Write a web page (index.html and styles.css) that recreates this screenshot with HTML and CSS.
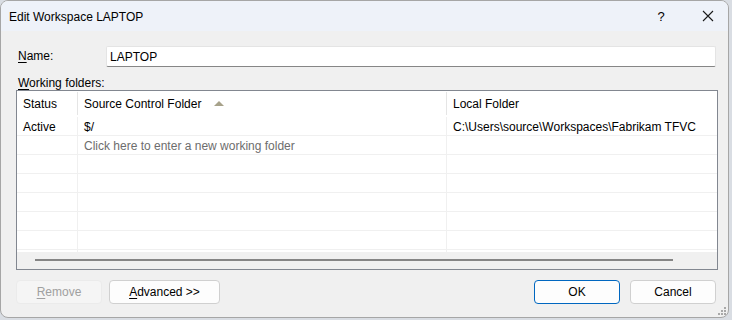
FILE: index.html
```html
<!DOCTYPE html>
<html lang="en">
<head>
    <meta charset="UTF-8">
    <title>Edit Workspace LAPTOP</title>
    <link rel="stylesheet" href="styles.css">
</head>
<body>
    <div class="window">
        <div class="titlebar">
            <span class="title">Edit Workspace LAPTOP</span>
            <span class="help">?</span>
            <span class="close">
                <svg width="12" height="12" viewBox="0 0 12 12">
                    <path d="M1 1 L11 11 M11 1 L1 11" stroke="#1a1a1a" stroke-width="1.1" fill="none"/>
                </svg>
            </span>
        </div>
        <div class="content">
            <div class="name-row">
                <label class="name-label"><u>N</u>ame:</label>
                <div class="name-input">LAPTOP</div>
            </div>
            <div class="section-label"><u>W</u>orking folders:</div>
            <div class="listbox">
                <div class="grid">
                    <div class="row header">
                        <div class="cell c-status">Status</div>
                        <div class="cell c-source">Source Control Folder <span class="sort"></span></div>
                        <div class="cell c-local">Local Folder</div>
                    </div>
                    <div class="row">
                        <div class="cell c-status">Active</div>
                        <div class="cell c-source">$/</div>
                        <div class="cell c-local">C:\Users\source\Workspaces\Fabrikam TFVC</div>
                    </div>
                    <div class="row">
                        <div class="cell c-status"></div>
                        <div class="cell c-source hint">Click here to enter a new working folder</div>
                        <div class="cell c-local"></div>
                    </div>
                    <div class="row"><div class="cell c-status"></div><div class="cell c-source"></div><div class="cell c-local"></div></div>
                    <div class="row"><div class="cell c-status"></div><div class="cell c-source"></div><div class="cell c-local"></div></div>
                    <div class="row"><div class="cell c-status"></div><div class="cell c-source"></div><div class="cell c-local"></div></div>
                    <div class="row"><div class="cell c-status"></div><div class="cell c-source"></div><div class="cell c-local"></div></div>
                    <div class="row"><div class="cell c-status"></div><div class="cell c-source"></div><div class="cell c-local"></div></div>
                    <div class="row last"><div class="cell c-status"></div><div class="cell c-source"></div><div class="cell c-local"></div></div>
                </div>
                <div class="hscroll"><div class="thumb"></div></div>
            </div>
            <div class="buttons">
                <button class="btn disabled"><u>R</u>emove</button>
                <button class="btn advanced"><u>A</u>dvanced &gt;&gt;</button>
                <span class="spacer"></span>
                <button class="btn ok">OK</button>
                <button class="btn">Cancel</button>
            </div>
        </div>
        <svg class="grip" width="9" height="9" viewBox="0 0 9 9">
            <rect x="6" y="0" width="2" height="2" fill="#a8a8a8"/>
            <rect x="3" y="3" width="2" height="2" fill="#a8a8a8"/>
            <rect x="6" y="3" width="2" height="2" fill="#a8a8a8"/>
            <rect x="0" y="6" width="2" height="2" fill="#a8a8a8"/>
            <rect x="3" y="6" width="2" height="2" fill="#a8a8a8"/>
            <rect x="6" y="6" width="2" height="2" fill="#a8a8a8"/>
        </svg>
    </div>
</body>
</html>
```

FILE: styles.css
```css
body {
    margin: 0;
    padding: 0;
    background: #d9dde3;
    font-family: "Segoe UI", "Liberation Sans", Arial, sans-serif;
    font-size: 12px;
    color: #000;
}
u {
    text-decoration: underline;
    text-underline-offset: 2px;
}
.window {
    position: relative;
    width: 727px;
    height: 316px;
    background: #f0f0f0;
    border: 1px solid #a6a6a6;
    border-radius: 8px;
    overflow: hidden;
    display: flex;
    flex-direction: column;
}
.titlebar {
    height: 30px;
    flex: none;
    background: #eef2f9;
    display: flex;
    align-items: center;
    padding-left: 8px;
}
.title {
    flex: 1;
    padding-top: 1px;
}
.help {
    width: 46px;
    text-align: center;
    margin-right: 4px;
    font-size: 13px;
}
.close {
    width: 40px;
    height: 30px;
    display: flex;
    align-items: center;
    justify-content: center;
}
.content {
    padding: 14px 12px 0 14px;
    display: flex;
    flex-direction: column;
}
.name-row {
    display: flex;
    align-items: center;
    height: 22px;
}
.name-label {
    width: 88px;
    padding-left: 3px;
}
.name-input {
    width: 610px;
    height: 21px;
    line-height: 21px;
    padding-left: 3px;
    background: #fff;
    border: 1px solid #e4e4e4;
    border-bottom: 1px solid #868686;
    border-radius: 2px;
    box-sizing: border-box;
}
.section-label {
    padding-left: 3px;
    height: 16px;
    line-height: 18px;
    margin-top: 7px;
}
.listbox {
    width: 702px;
    height: 180px;
    box-sizing: border-box;
    border: 1px solid #828790;
    background: #fff;
    display: flex;
    flex-direction: column;
    margin-left: 1px;
}
.grid {
    height: 161px;
    overflow: hidden;
}
.row {
    display: flex;
    height: 19px;
    border-bottom: 1px solid #f0f0f0;
    box-sizing: border-box;
}
.row.header {
    height: 26px;
    border-bottom: none;
}
.cell {
    box-sizing: border-box;
    padding-left: 6px;
    padding-top: 1px;
    line-height: 18px;
    white-space: nowrap;
    overflow: hidden;
}
.header .cell {
    height: 23px;
    margin-top: 1px;
    padding-top: 0;
    line-height: 24px;
}
.c-status {
    width: 61px;
    border-right: 1px solid #f0f0f0;
}
.c-source {
    width: 369px;
    border-right: 1px solid #f0f0f0;
}
.c-local {
    flex: 1;
}
.header .c-status,
.header .c-source {
    border-right: 1px solid #e5e5e5;
}
.hint {
    color: #6d6d6d;
}
.sort {
    display: inline-block;
    width: 0;
    height: 0;
    border-left: 5px solid transparent;
    border-right: 5px solid transparent;
    border-bottom: 5px solid #a7a28a;
    margin-left: 9px;
    vertical-align: 2px;
}
.hscroll {
    flex: 1;
    background: #f0f0f0;
    display: flex;
    align-items: center;
    padding-left: 18px;
}
.thumb {
    width: 638px;
    height: 2px;
    background: #858585;
    margin-top: -1px;
}
.buttons {
    display: flex;
    margin-top: 10px;
    gap: 7px;
    padding-left: 1px;
}
.spacer {
    flex: 1;
}
.btn {
    font-family: inherit;
    font-size: 12px;
    height: 24px;
    width: 86px;
    background: #fdfdfd;
    border: 1px solid #d0d0d0;
    border-radius: 4px;
    color: #000;
    padding: 0;
}
.btn.disabled {
    background: #f5f5f5;
    border-color: #ebebeb;
    color: #a0a0a0;
}
.btn.advanced {
    width: 111px;
}
.btn.ok {
    border-color: #0067c0;
    margin-right: 3px;
}
.grip {
    position: absolute;
    right: 1px;
    bottom: 1px;
}
```
